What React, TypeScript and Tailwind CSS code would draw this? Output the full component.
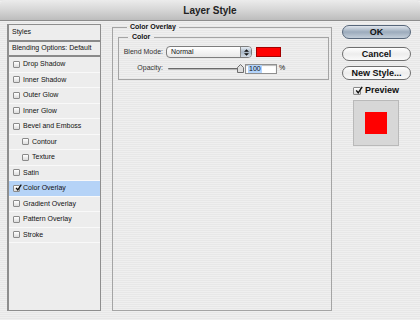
import React from "react";

const font = "font-['Liberation_Sans',Arial,sans-serif]";

const styleItems = [
  { label: "Drop Shadow", indent: false, checked: false },
  { label: "Inner Shadow", indent: false, checked: false },
  { label: "Outer Glow", indent: false, checked: false },
  { label: "Inner Glow", indent: false, checked: false },
  { label: "Bevel and Emboss", indent: false, checked: false },
  { label: "Contour", indent: true, checked: false },
  { label: "Texture", indent: true, checked: false },
  { label: "Satin", indent: false, checked: false },
  { label: "Color Overlay", indent: false, checked: true },
  { label: "Gradient Overlay", indent: false, checked: false },
  { label: "Pattern Overlay", indent: false, checked: false },
  { label: "Stroke", indent: false, checked: false },
];

function Check({ checked, size = 7 }: { checked: boolean; size?: number }) {
  return (
    <span
      className="relative inline-block shrink-0 rounded-[1px] border border-[#8a8a8a] bg-gradient-to-b from-white to-[#dcdcdc]"
      style={{ width: size, height: size }}
    >
      {checked && (
        <svg
          viewBox="0 0 10 10"
          className="absolute -top-[2px] left-[1px]"
          style={{ width: size, height: size }}
        >
          <path d="M1.5 5.5 L4 8.5 L9 1" fill="none" stroke="#111" strokeWidth="1.8" />
        </svg>
      )}
    </span>
  );
}

function PillButton({ label, primary }: { label: string; primary?: boolean }) {
  return (
    <div
      className={`flex h-[14px] w-[69px] items-center justify-center rounded-full border text-[9px] font-bold leading-none text-[#111] ${
        primary
          ? "border-[#56667a] bg-gradient-to-b from-[#dfe5ec] via-[#9cabbc] to-[#c3ced9]"
          : "border-[#6f6f6f] bg-gradient-to-b from-white via-[#ededed] to-[#fafafa]"
      }`}
    >
      {label}
    </div>
  );
}

export default function App() {
  return (
    <div
      className={`${font} flex h-[320px] w-[420px] flex-col overflow-hidden bg-[repeating-linear-gradient(0deg,#efefef_0px,#efefef_1px,#e7e7e7_1px,#e7e7e7_2px)] text-[#111]`}
    >
      {/* title bar */}
      <div className="flex h-[21px] shrink-0 items-center justify-center rounded-t-[5px] border-b border-[#8c8c8c] bg-gradient-to-b from-[#ececec] via-[#d6d6d6] to-[#bdbdbd]">
        <span className="text-[10px] font-bold text-[#222]">Layer Style</span>
      </div>

      <div className="flex">
        {/* styles list */}
        <div className="ml-[7px] mt-[3px] flex h-[287px] w-[94px] flex-col border border-l-2 border-[#8e8e8e] bg-[#ededed] text-[7px]">
          <div className="flex h-[17px] items-center border-b-2 border-[#8a8a8a] pl-[3px]">
            Styles
          </div>
          <div className="flex h-[15px] items-center border-b-2 border-[#8a8a8a] pl-[3px]">
            Blending Options: Default
          </div>
          {styleItems.map((item) => (
            <div
              key={item.label}
              className={`flex h-[15.5px] items-center gap-[3px] border-b border-[#f9f9f9] ${
                item.indent ? "pl-[13px]" : "pl-[4px]"
              } ${item.checked ? "bg-[#b5d3f7]" : ""}`}
            >
              <Check checked={item.checked} />
              <span>{item.label}</span>
            </div>
          ))}
        </div>

        {/* settings */}
        <fieldset className="ml-[11px] mt-[2px] h-[288px] w-[220px] border border-[#a4a4a4] pl-[5px] pr-[2px]">
          <legend className="ml-[9px] px-[3px] text-[7px] font-bold leading-[8px]">
            Color Overlay
          </legend>
          <fieldset className="mt-[2px] h-[47px] border border-[#a4a4a4]">
            <legend className="ml-[9px] px-[4px] text-[7px] font-bold leading-[8px]">
              Color
            </legend>
            <div className="mt-[5px] flex h-[12px] items-center">
              <span className="w-[44px] whitespace-nowrap text-right text-[7px] text-[#333]">
                Blend Mode:
              </span>
              <div className="ml-[3px] flex h-[12px] w-[86px] items-stretch overflow-hidden rounded-[4px] border border-[#7d7d7d] bg-gradient-to-b from-white to-[#e8e8e8]">
                <span className="flex flex-1 items-center pl-[4px] text-[7px]">
                  Normal
                </span>
                <span className="flex w-[11px] flex-col items-center justify-center gap-[1px] border-l border-[#8a8a8a] bg-gradient-to-b from-[#e6edf5] via-[#a9b7c6] to-[#d0d9e3]">
                  <svg viewBox="0 0 6 3" className="h-[3px] w-[5px]">
                    <path d="M0 3 L3 0 L6 3Z" fill="#111" />
                  </svg>
                  <svg viewBox="0 0 6 3" className="h-[3px] w-[5px]">
                    <path d="M0 0 L6 0 L3 3Z" fill="#111" />
                  </svg>
                </span>
              </div>
              <div className="ml-[4px] h-[10px] w-[25px] border border-[#a30000] bg-[#ff0000]" />
            </div>
            <div className="mt-[5px] flex h-[11px] items-center">
              <span className="w-[44px] whitespace-nowrap text-right text-[7px] text-[#333]">
                Opacity:
              </span>
              <div className="relative ml-[5px] flex h-[11px] w-[76px] items-center">
                <div className="h-[2px] w-[72px] rounded-full border-t border-[#6a6a6a] bg-[#b8b8b8]" />
                <svg viewBox="0 0 7 9" className="absolute right-0 top-[1px] h-[9px] w-[7px]">
                  <path
                    d="M0.5 8.5 L0.5 3.5 L3.5 0.5 L6.5 3.5 L6.5 8.5Z"
                    fill="#dedede"
                    stroke="#6d6d6d"
                    strokeWidth="1"
                  />
                </svg>
              </div>
              <div className="ml-[1px] flex h-[10px] w-[32px] items-center border border-[#8f8f8f] bg-white pl-[2px] shadow-[inset_0_1px_1px_#bbb]">
                <span className="bg-[#b3d4fc] px-[1px] text-[7px] leading-[8px]">100</span>
              </div>
              <span className="ml-[2px] text-[7px]">%</span>
            </div>
          </fieldset>
        </fieldset>

        {/* buttons */}
        <div className="ml-[10px] mt-[4px] flex w-[69px] flex-col items-center">
          <PillButton label="OK" primary />
          <div className="mt-[8px]">
            <PillButton label="Cancel" />
          </div>
          <div className="mt-[5px]">
            <PillButton label="New Style..." />
          </div>
          <div className="mt-[6px] flex w-[57px] items-center gap-[4px] self-start pl-[11px]">
            <Check checked size={8} />
            <span className="text-[9px] font-bold leading-none">Preview</span>
          </div>
          <div className="ml-[11px] mt-[5px] flex h-[46px] w-[46px] items-center justify-center self-start border border-[#b9b9b9] bg-[#d7d7d7]">
            <div className="h-[22px] w-[22px] bg-[#ff0000]" />
          </div>
        </div>
      </div>
    </div>
  );
}
